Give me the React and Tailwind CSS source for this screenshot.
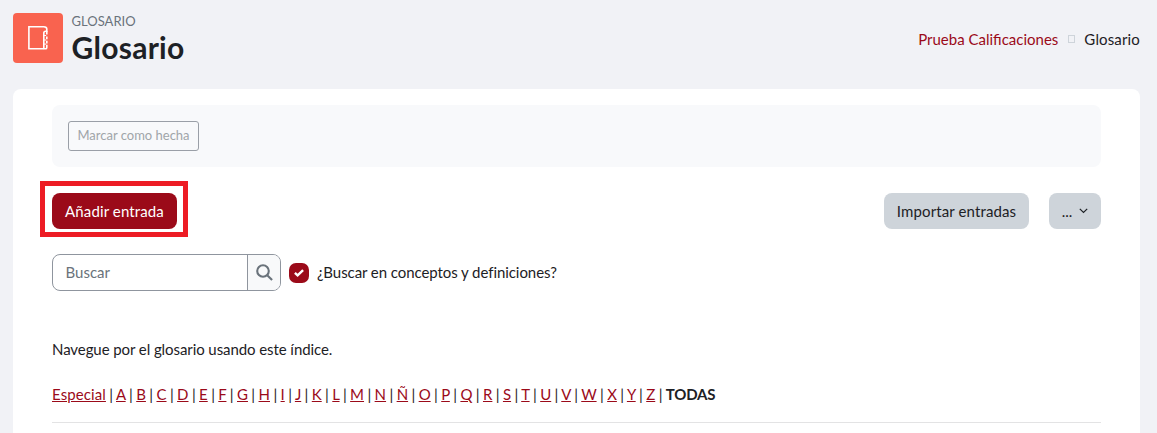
import React from "react";

const letters = "ABCDEFGHIJKLMNÑOPQRSTUVWXYZ".split("");
const entries = ["Especial", ...letters];

function GlossaryIcon() {
  return (
    <svg width="24" height="26" viewBox="0 0 24 26" fill="none" stroke="#fff" strokeWidth="1.6">
      <path d="M18 23.8H2.9V1.8h14.8c2 0 3.1.8 3.1 2.3v2.1h-1.2c-1.2 0-1.8.7-1.8 1.8v15.8" />
      <path d="M17.8 23.8h1.6c.9 0 1.4-.5 1.4-1.4v-2.7M20.8 6.2v3.4M20.8 11.4v2.8M20.8 15.8v2.6" />
      <path d="M17.8 10.5h2.4M17.8 15h2.4M17.8 19.1h2.4" strokeWidth="1" />
    </svg>
  );
}

function Header() {
  return (
    <header className="flex h-[89px] items-start justify-between pr-[17px] pl-[13px] pt-[13px]">
      <div className="flex">
        <div className="flex h-[50px] w-[50px] items-center justify-center rounded-[4px] bg-[#f9634f]">
          <GlossaryIcon />
        </div>
        <div className="ml-[8.6px]">
          <div className="h-4 text-[13px] leading-[16px] text-[#6a737b]">GLOSARIO</div>
          <h1 className="text-[30px] leading-[37px] font-bold tracking-[0.25px]">Glosario</h1>
        </div>
      </div>
      <nav className="mt-[15px] flex items-center leading-[23px]">
        <a className="text-[#9b0a19]">Prueba Calificaciones</a>
        <span className="-mt-px mr-[9px] ml-[10px] h-[8px] w-[7px] border border-[#ced4da]" />
        <span className="tracking-[0.15px]">Glosario</span>
      </nav>
    </header>
  );
}

function Toolbar() {
  return (
    <div className="mt-[14px] -ml-3 flex items-center justify-between">
      <div className="border-5 border-[#ed1c24] pt-[7px] pr-[6px] pb-[3px] pl-[7px]">
        <button className="block h-9 w-[125px] rounded-lg bg-[#9b0a19] tracking-[0.12px] text-white">
          Añadir entrada
        </button>
      </div>
      <div className="mt-[4px] flex gap-5">
        <button className="h-9 w-[145px] rounded-lg bg-[#ced4da] tracking-[0.12px]">Importar entradas</button>
        <button className="flex h-9 w-[52px] items-center justify-center gap-[7px] rounded-lg bg-[#ced4da]">
          <span>...</span>
          <svg width="9" height="6" viewBox="0 0 9 6" fill="none" stroke="#1d2125" strokeWidth="1.2">
            <path d="m.8.8 3.7 3.7L8.2.8" />
          </svg>
        </button>
      </div>
    </div>
  );
}

function Search() {
  return (
    <div className="mt-[17px] flex items-center">
      <div className="flex h-[37px] w-[229px] overflow-hidden rounded-lg border border-[#8f959e]">
        <input
          className="w-[194px] pl-[12.5px] text-[15px] placeholder:text-[#6a737b] focus:outline-none"
          placeholder="Buscar"
        />
        <button className="flex flex-1 items-center justify-center border-l border-[#8f959e] bg-[#f8f9fa]">
          <svg width="17" height="17" viewBox="0 0 17 17" fill="none" stroke="#6a737b" strokeWidth="2.1">
            <circle cx="7" cy="7" r="5.8" />
            <path d="m11.2 11.2 4.9 4.9" />
          </svg>
        </button>
      </div>
      <span className="ml-2 flex h-5 w-5 items-center justify-center rounded-[7px] bg-[#9b0a19] text-white">
        <svg width="10" height="8" viewBox="0 0 10 8" fill="none" stroke="currentColor" strokeWidth="2.4">
          <path d="m.9 3.8 2.7 2.5L9.1 1.1" />
        </svg>
      </span>
      <span className="ml-2 leading-[23px] tracking-[-0.07px]">¿Buscar en conceptos y definiciones?</span>
    </div>
  );
}

export default function App() {
  return (
    <div className="h-[433px] overflow-hidden bg-[#f1f2f6] font-['Lato',sans-serif] text-[15px] text-[#1d2125]">
      <Header />
      <main className="mr-[17px] ml-[13px] h-[400px] rounded-t-lg bg-white pt-4 pr-[39px] pl-[39px]">
        <div className="h-[62px] rounded-lg bg-[#f8f9fb] p-4">
          <button className="block h-[30px] w-[131px] rounded-[3px] border border-[#9a9fa7] text-[13px] text-[#a0a5a9]">
            Marcar como hecha
          </button>
        </div>
        <Toolbar />
        <Search />
        <p className="mt-[47px] leading-[23px] tracking-[-0.08px]">Navegue por el glosario usando este índice.</p>
        <p className="mt-[22px] leading-[23px] [word-spacing:-0.44px] whitespace-nowrap">
          {entries.map((entry) => (
            <React.Fragment key={entry}>
              <a className={entry === "Especial" ? "tracking-[0.1px] text-[#9b0a19] underline" : "text-[#9b0a19] underline"}>
                {entry}
              </a>
              {" | "}
            </React.Fragment>
          ))}
          <b className="tracking-[-0.2px]">TODAS</b>
        </p>
        <hr className="mt-[16px] border-[#e3e3e4]" />
      </main>
    </div>
  );
}
